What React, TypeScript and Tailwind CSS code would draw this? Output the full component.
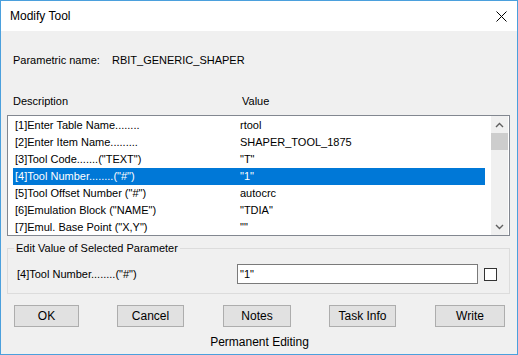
import React from 'react'

const rows = [
    { desc: '[1]Enter Table Name........', value: 'rtool' },
    { desc: '[2]Enter Item Name.........', value: 'SHAPER_TOOL_1875' },
    { desc: '[3]Tool Code.......("TEXT")', value: '"T"' },
    { desc: '[4]Tool Number........("#")', value: '"1"', selected: true },
    { desc: '[5]Tool Offset Number ("#")', value: 'autocrc' },
    { desc: '[6]Emulation Block ("NAME")', value: '"TDIA"' },
    { desc: '[7]Emul. Base Point ("X,Y")', value: '""' },
]

const buttons = [
    { label: 'OK', cls: 'ml-[13px] w-[65px]' },
    { label: 'Cancel', cls: 'ml-[38px] w-[67px]' },
    { label: 'Notes', cls: 'ml-[39px] w-[68px]' },
    { label: 'Task Info', cls: 'ml-[38px] w-[67px]' },
    { label: 'Write', cls: 'ml-[39px] w-[70px]' },
]

export default function App() {
    return (
        <div
            className="w-[518px] h-[355px] flex flex-col border border-[#4ba0dd] text-[11px] text-black bg-[#f0f0f0]"
            style={{ fontFamily: '"Liberation Sans", Arial, sans-serif' }}
        >
            {/* Title bar */}
            <div className="h-[30px] bg-white flex items-center justify-between shrink-0">
                <span className="pl-[9px] text-[12px]">Modify Tool</span>
                <svg width="11" height="11" viewBox="0 0 11 11" className="mr-[10px]">
                    <path d="M0.5 0.5 L10.5 10.5 M10.5 0.5 L0.5 10.5" stroke="#000" strokeWidth="1" />
                </svg>
            </div>

            <div className="flex-1 flex flex-col">
                {/* Parametric name */}
                <div className="mt-[21px] h-[17px] leading-[17px] flex pl-[12px]">
                    <span className="w-[99px]">Parametric name:</span>
                    <span>RBIT_GENERIC_SHAPER</span>
                </div>

                {/* Column headers */}
                <div className="mt-[24px] h-[17px] leading-[17px] flex pl-[12px]">
                    <span className="w-[229px]">Description</span>
                    <span>Value</span>
                </div>

                {/* List box */}
                <div className="mt-[5px] ml-[6px] mr-[7px] h-[121px] border border-[#828790] bg-white flex">
                    <div className="flex-1 overflow-hidden pt-[1px] pl-[5px] pr-[6px]">
                        {rows.map((r) => (
                            <div
                                key={r.desc}
                                className={`h-[17px] flex items-center whitespace-nowrap ${r.selected ? 'bg-[#0078d7] text-white' : ''}`}
                            >
                                <span className="w-[227px] pl-[2px]">{r.desc}</span>
                                <span>{r.value}</span>
                            </div>
                        ))}
                    </div>
                    <div className="w-[17px] mr-[1px] bg-[#f0f0f0] flex flex-col">
                        <div className="h-[17px] flex items-center justify-center">
                            <svg width="9" height="6" viewBox="0 0 9 6">
                                <path d="M1 5 L4.5 1.5 L8 5" stroke="#606060" strokeWidth="1.4" fill="none" />
                            </svg>
                        </div>
                        <div className="h-[17px] bg-[#cdcdcd]" />
                        <div className="flex-1" />
                        <div className="h-[17px] flex items-center justify-center">
                            <svg width="9" height="6" viewBox="0 0 9 6">
                                <path d="M1 1 L4.5 4.5 L8 1" stroke="#606060" strokeWidth="1.4" fill="none" />
                            </svg>
                        </div>
                    </div>
                </div>

                {/* Edit value group */}
                <fieldset className="mt-[4px] ml-[6px] mr-[7px] border border-[#dcdcdc] pl-[9px] pr-[12px] pb-[9px]">
                    <legend className="ml-[-3px] px-[2px] leading-[16px]">Edit Value of Selected Parameter</legend>
                    <div className="mt-[8px] h-[20px] flex items-center">
                        <span className="w-[220px]">[4]Tool Number........("#")</span>
                        <div className="w-[241px] h-[20px] border border-[#7a7a7a] bg-white flex items-center pl-[2px]">
                            "1"
                        </div>
                        <div className="ml-[6px] w-[13px] h-[13px] border border-[#333333] bg-white" />
                    </div>
                </fieldset>

                {/* Buttons */}
                <div className="mt-[11px] flex">
                    {buttons.map((b) => (
                        <div
                            key={b.label}
                            className={`${b.cls} h-[22px] border border-[#adadad] bg-[#e1e1e1] flex items-center justify-center text-[12px]`}
                        >
                            {b.label}
                        </div>
                    ))}
                </div>

                <div className="mt-[7px] text-center text-[12px] leading-[17px] pl-[1px]">Permanent Editing</div>
            </div>
        </div>
    )
}
